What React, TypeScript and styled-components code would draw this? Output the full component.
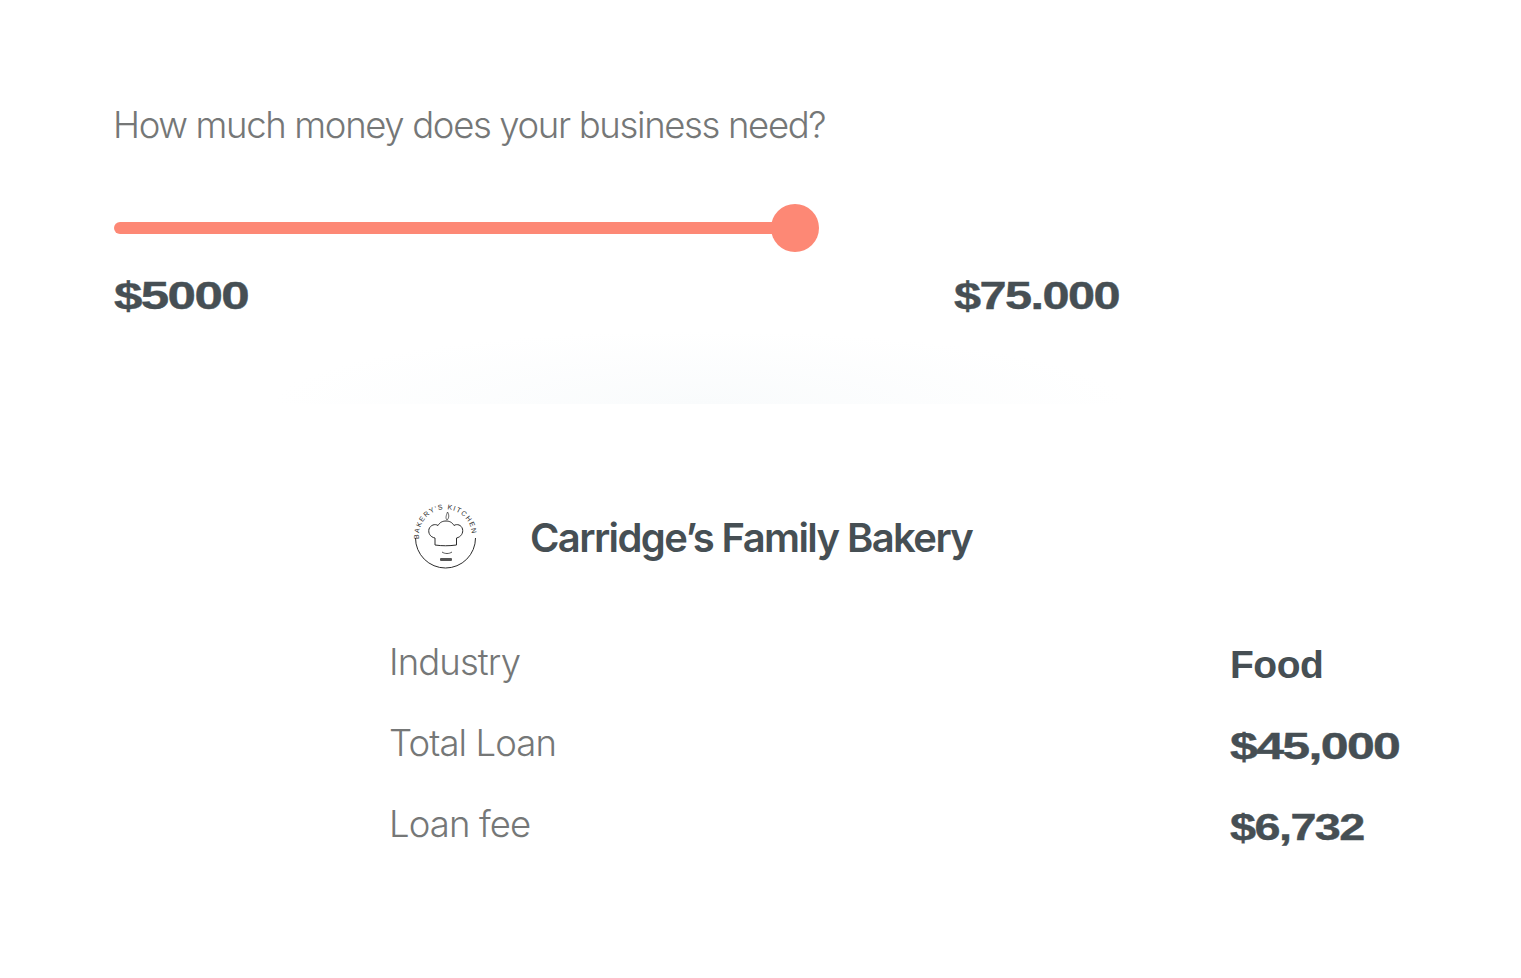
import React from 'react'
import styled, { createGlobalStyle } from 'styled-components'

const GlobalStyle = createGlobalStyle`
  html, body {
    margin: 0;
    background: #fff;
  }
`

const Page = styled.div`
  position: relative;
  width: 1521px;
  height: 978px;
  overflow: hidden;
  background: #fff;
  font-family: Inter, 'Liberation Sans', sans-serif;
`

const Haze = styled.div`
  position: absolute;
  left: 270px;
  top: 330px;
  width: 860px;
  height: 74px;
  background: radial-gradient(ellipse at 50% 100%, #f9fbfc 0%, #ffffff 70%);
`

const LoanPicker = styled.section`
  position: relative;
  display: flex;
  flex-direction: column;
  padding: 102px 0 0 114px;
  width: 1006px;
`

const Question = styled.h2`
  margin: 0 0 0 -1px;
  font-size: 36.5px;
  line-height: 46px;
  font-weight: 300;
  letter-spacing: -1.35px;
  color: #757777;
  white-space: nowrap;
`

const Slider = styled.div`
  display: flex;
  align-items: center;
  height: 48px;
  margin-top: 56px;
  width: 705px;
`

const Track = styled.div`
  flex: 1;
  height: 12px;
  margin-right: -2px;
  border-radius: 6px 0 0 6px;
  background: #fd8875;
`

const Thumb = styled.div`
  width: 48px;
  height: 48px;
  border-radius: 50%;
  background: #fd8875;
`

const RangeLabels = styled.div`
  display: flex;
  justify-content: space-between;
  margin-top: 24px;
`

const WideFigure = styled.span<{ $stretch: number; $size: number }>`
  display: inline-block;
  font-family: 'Liberation Sans', Arial, sans-serif;
  font-weight: 700;
  font-size: ${(p) => p.$size}px;
  line-height: 40px;
  letter-spacing: ${(p) => (p.$stretch > 1 ? -1.2 : -0.5)}px;
  color: #464f54;
  white-space: nowrap;
  -webkit-text-stroke: ${(p) => (p.$stretch > 1 ? 0.4 : 0)}px #464f54;
  transform: scaleX(${(p) => p.$stretch});
  transform-origin: left center;
`

const RangeSlot = styled.div<{ $width: number }>`
  width: ${(p) => p.$width}px;
`

const Summary = styled.section`
  position: relative;
  display: flex;
  flex-direction: column;
  padding: 185px 0 0 390px;
`

const Business = styled.div`
  display: flex;
  align-items: center;
  gap: 50px;
  height: 72px;
  padding-left: 22px;
`

const BusinessName = styled.h3`
  margin: 0;
  font-size: 40px;
  font-weight: 600;
  letter-spacing: -1.6px;
  color: #464f54;
  white-space: nowrap;
`

const Rows = styled.div`
  display: grid;
  grid-template-columns: 840px 1fr;
  grid-auto-rows: 81px;
  margin-top: 65px;
`

const RowLabel = styled.div`
  margin-left: -1px;
  font-size: 36.5px;
  font-weight: 300;
  letter-spacing: -0.9px;
  line-height: 48px;
  color: #757777;
`

const RowValue = styled.div<{ $top: number }>`
  padding-top: ${(p) => p.$top}px;
`

const rows = [
  { label: 'Industry', value: 'Food', stretch: 1, size: 39, top: 7 },
  { label: 'Total Loan', value: '$45,000', stretch: 1.39, size: 36, top: 8 },
  { label: 'Loan fee', value: '$6,732', stretch: 1.3, size: 36, top: 8 },
]

const BakeryLogo = () => (
  <svg width="68" height="68" viewBox="0 0 68 68" fill="none" stroke="#2c2c2c">
    <defs>
      <path id="logo-arc" d="M7.2 36 A26.5 26.5 0 1 1 59.8 36" />
    </defs>
    <text
      fontFamily="'Liberation Sans', sans-serif"
      fontSize="7"
      fill="#2c2c2c"
      stroke="none"
    >
      <textPath href="#logo-arc" textLength="84">BAKERY'S KITCHEN</textPath>
    </text>
    <path d="M3.5 35 A30 30 0 1 0 63.5 35" strokeWidth="1" />
    <path
      d="M23 42 V35 C18 34 16 30 17 26 C18.5 22 23 20.5 26 22.5 C28 19 31 18 34 18 C37 18 40 19 42 22.5 C45 20.5 49.5 22 50.5 26 C51.5 30 49 34 44.5 35 V42 C37 43 30 43 23 42 Z"
      strokeWidth="1"
    />
    <path d="M35 17 C33 15 34.5 12 35.5 9 C37 11 37.5 15 35 17 Z" strokeWidth="0.7" />
    <path d="M30 49 C33 51 37 51 40 49" strokeWidth="0.8" />
    <rect x="28" y="55" width="12" height="3" rx="1" fill="#555" stroke="none" />
  </svg>
)

export default function App() {
  return (
    <Page>
      <GlobalStyle />
      <Haze />
      <LoanPicker>
        <Question>How much money does your business need?</Question>
        <Slider>
          <Track />
          <Thumb />
        </Slider>
        <RangeLabels>
          <RangeSlot $width={135}>
            <WideFigure $size={38} $stretch={1.345}>$5000</WideFigure>
          </RangeSlot>
          <RangeSlot $width={166}>
            <WideFigure $size={38} $stretch={1.28}>$75.000</WideFigure>
          </RangeSlot>
        </RangeLabels>
      </LoanPicker>
      <Summary>
        <Business>
          <BakeryLogo />
          <BusinessName>Carridge’s Family Bakery</BusinessName>
        </Business>
        <Rows>
          {rows.map((row) => (
            <React.Fragment key={row.label}>
              <RowLabel>{row.label}</RowLabel>
              <RowValue $top={row.top}>
                <WideFigure $size={row.size} $stretch={row.stretch}>{row.value}</WideFigure>
              </RowValue>
            </React.Fragment>
          ))}
        </Rows>
      </Summary>
    </Page>
  )
}
